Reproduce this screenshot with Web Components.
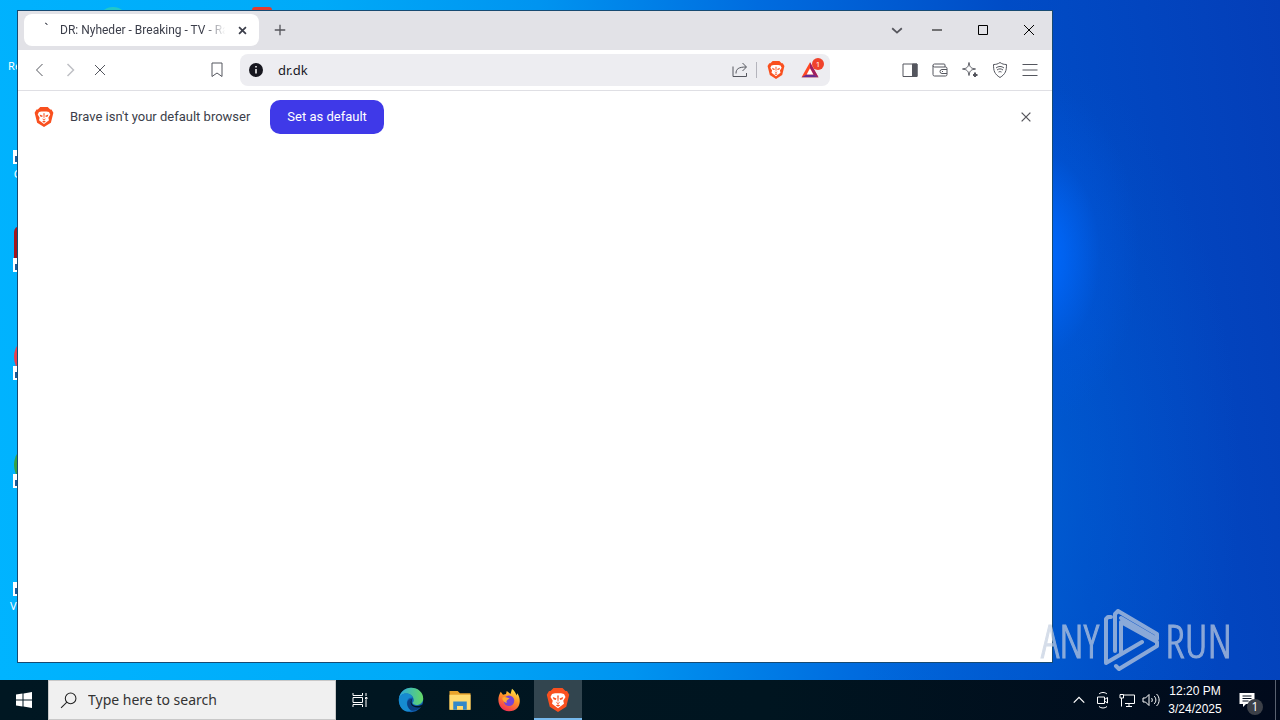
<!DOCTYPE html>
<html lang="en">
<head>
<meta charset="utf-8">
<title>Desktop</title>
<style>
    body {
        margin: 0;
        min-height: 100vh;
        display: flex;
        flex-direction: column;
        overflow: hidden;
        font-family: "Noto Sans", "Open Sans", sans-serif;
    }
    desk-top {
        flex: 1;
    }
</style>
</head>
<body>
<desk-top>
    <desk-icon slot="icons" label="Recycle Bin"></desk-icon>
    <desk-icon slot="icons" label="CCleaner" shortcut></desk-icon>
    <desk-icon slot="icons" label="Adobe Acrobat" color="#a3161c" shape="square" shortcut></desk-icon>
    <desk-icon slot="icons" label="Firefox" color="#e8404c" shape="circle" shortcut></desk-icon>
    <desk-icon slot="icons" label="Google Chrome" color="#35a244" shape="circle" shortcut></desk-icon>
    <desk-icon slot="icons" label="VLC media player" shortcut></desk-icon>
    <browser-window>
        <browser-tab slot="tabs">DR: Nyheder - Breaking - TV - Radio</browser-tab>
        <tool-bar slot="toolbar" url="dr.dk"></tool-bar>
        <info-bar slot="infobar" action="Set as default">Brave isn't your default browser</info-bar>
    </browser-window>
    <any-run-mark slot="mark"></any-run-mark>
</desk-top>
<task-bar time="12:20 PM" date="3/24/2025"></task-bar>

<script>
const icons = {
    back: `<path d="M21 4L9 16l12 12"/>`,
    forward: `<path d="M11 4l12 12-12 12"/>`,
    close: `<path d="M6 6l20 20M26 6L6 26"/>`,
    plus: `<path d="M16 4v24M4 16h24"/>`,
    down: `<path d="M5 12l11 10 11-10"/>`,
    minimize: `<path d="M6 16h20"/>`,
    maximize: `<path d="M7 7h18v18H7z"/>`,
    bookmark: `<path d="M6 2h20v27l-10-7-10 7z" stroke-linejoin="round"/>`,
    info: `<circle cx="16" cy="16" r="14" fill="#17171f" stroke="none"/><path d="M16 14v9M16 8v3" stroke="#fff" stroke-width="3"/>`,
    share: `<path d="M2 9v20h27v-7M8 23c0-9 5-13 20-13M21 2l8 8-8 8"/>`,
    lion: `<path d="M10 0h12l4 4h2l3 5-1 4-3 12-11 7-11-7-3-12-1-4 3-5h2z" fill="#f9501f"/>
        <path d="M12 7h8l4 1 2 4-3 5 1 4-8 6-8-6 1-4-3-5 2-4z" fill="#fff"/>
        <path d="M9 12l5 2-1 2-3-1zM23 12l-5 2 1 2 3-1zM15 10h2l-.5 8h-1zM13 18l3 2 3-2-2 3h-2zM13 23l3-1 3 1-3 2z" fill="#f9501f"/>`,
    bat: `<path d="M16 2L31 29H1z" fill="#ff4724"/><path d="M16 2l15 27-9-5-6-11z" fill="#9e1f63"/><path d="M1 29l9-5h12l9 5z" fill="#662d91"/><path d="M16 13l6 11H10z" fill="#fff"/>`,
    sidebar: `<path d="M2 4h28v25H2z"/><path d="M21 4h9v25h-9z" fill="currentColor"/>`,
    wallet: `<path d="M26 10V6a2 2 0 0 0-2-2H5a3 3 0 0 0 0 6h22a3 3 0 0 1 3 3v12a3 3 0 0 1-3 3H5a3 3 0 0 1-3-3V7M30 15H20a4 4 0 0 0 0 8h10M20 19h2"/>`,
    sparkle: `<path d="M14 1c1 9 4 12 13 13-9 1-12 4-13 13C13 18 10 15 1 14 10 13 13 10 14 1z" stroke-linejoin="round"/><path d="M26 21v9M22 26h9" stroke-width="4"/>`,
    shield: `<path d="M16 1c4 3 8 4 13 4 0 13-2 19-13 26C5 24 3 18 3 5c5 0 9-1 13-4z"/><path d="M8 12c5-4 11-4 16 0M10 16c4-3 8-3 12 0M13 20c2-1 4-1 6 0"/>`,
    menu: `<path d="M1 5h30M1 16h30M1 27h30"/>`,
    windows: `<path d="M0 5l13-2v12H0zM15 3l17-3v15H15zM0 17h13v12L0 27zM15 17h17v15l-17-3z" fill="#fff" stroke="none"/>`,
    search: `<circle cx="20" cy="12" r="10"/><path d="M13 19L2 30"/>`,
    taskview: `<path d="M2 2v5h19V2M2 30v-5h19v5M2 11h19v10H2zM28 2v6M28 16v14M27 11h3v3h-3z"/>`,
    edge: `<defs><linearGradient id="wave" x1="0" y1="0" x2="1" y2="0"><stop stop-color="#2aa7e0"/><stop offset="1" stop-color="#64d865"/></linearGradient></defs>
        <circle cx="16" cy="16" r="15" fill="#1263b5"/>
        <path d="M1 15C2 6 9 1 16 1c9 0 15 6 15 13 0 5-4 8-8 8-3 0-5-1-5-3 1-1 2-2 1-5-1-4-5-6-9-6-5 0-8 3-9 7z" fill="url(#wave)"/>
        <path d="M1 16c0-5 4-8 9-8 4 0 7 2 8 5-8-1-10 9-2 16-8 4-15-4-15-13z" fill="#168bd0"/>
        <path d="M16 29c-7-6-6-15 2-15-4 6 2 13 12 7-3 6-8 9-14 8z" fill="#0b3f82"/>
        <path d="M18 14c-4 5 0 11 9 9l5-2v3l-4 1c-6 1-11-1-12-4-1-3 0-5 2-7z" fill="#001722"/>`,
    folder: `<path d="M2 4h11l3 3h14v22H2z" fill="#e8a42c"/><path d="M2 9h28v20H2z" fill="#ffdb70"/><path d="M7 18h18v11h-5v-5h-8v5H7z" fill="#3289c8"/>`,
    firefox: `<defs><linearGradient id="fire" x1=".8" y1="0" x2=".3" y2="1"><stop stop-color="#fff04a"/><stop offset=".45" stop-color="#ff9427"/><stop offset="1" stop-color="#f22c55"/></linearGradient></defs>
        <path d="M5 5l3 4 4-1 1-4 5 4 2-7c4 3 5 6 6 9l1-3c7 10 3 24-11 24C3 31-2 16 5 5z" fill="url(#fire)"/>
        <circle cx="16" cy="17" r="7" fill="#7544d6"/><path d="M7 13c4-2 6 0 10 1-4 2-5 3-4 6-4-1-6-4-6-7z" fill="#ffab31"/>`,
    up: `<path d="M4 22l12-12 12 12"/>`,
    meet: `<path d="M5 10h14v13H5zM19 15l6-4v11l-6-4M8 4c4-4 12-4 16 0M8 29c4 4 12 4 16 0"/>`,
    network: `<path d="M9 6h22v17H12M20 23v6M14 29h12M2 5h7v7H2zM5 12v17"/>`,
    volume: `<path d="M0 12h5l7-7v22l-7-7H0zM17 12c2 2 2 6 0 8M22 8c5 4 5 12 0 16M27 4c7 6 7 18 0 24"/>`,
    notes: `<path d="M1 2h30v22H14l-6 6v-6H1z" fill="#fff" stroke="none"/><path d="M7 8h18M7 13h18M7 18h12" stroke="#020c1c"/>`
};

class SvgIcon extends HTMLElement {
    constructor() {
        super();
        this.attachShadow({ mode: "open" });
    }

    connectedCallback() {
        const name = this.getAttribute("name");
        const size = this.getAttribute("size") || "16";
        const line = this.getAttribute("line") || "2";
        const painted = ["lion", "bat", "edge", "folder", "firefox"].includes(name);
        this.shadowRoot.innerHTML = `
            <style>
                :host { display: inline-flex; flex: none; }
                svg { width: ${size}px; height: ${size}px; overflow: visible; }
            </style>
            <svg viewBox="0 0 32 32" fill="none" stroke="${painted ? "none" : "currentColor"}" stroke-width="${line}" aria-hidden="true">${icons[name]}</svg>
        `;
    }
}

class DeskTop extends HTMLElement {
    constructor() {
        super();
        this.attachShadow({ mode: "open" });
        this.shadowRoot.innerHTML = `
            <style>
                :host {
                    display: block;
                    position: relative;
                    overflow: hidden;
                    background:
                        radial-gradient(ellipse 100px 170px at 1040px 255px, #006aff, #0066f8cc 25%, #005ce844 60%, #005ce800),
                        radial-gradient(ellipse 200px 420px at 1040px 480px, #0064d888, #0060d444 50%, #0062dc00),
                        linear-gradient(82deg, #00b4ff 0%, #00aaf8 30%, #0094f0 46%, #006cdf 62%, #004cc6 80%, #043eb8 100%);
                }
                .icons {
                    display: flex;
                    flex-direction: column;
                    padding-top: 10px;
                }
                .peek {
                    position: absolute;
                    border-radius: 50%;
                }
                .teal { left: 98px; top: 7px; width: 30px; height: 30px; background: #22c7c9; }
                .red { left: 252px; top: 7px; width: 20px; height: 20px; border-radius: 3px; background: #e23a2e; }
                ::slotted(browser-window) {
                    position: absolute;
                    inset: 10px 227px 17px 17px;
                }
                ::slotted(any-run-mark) {
                    position: absolute;
                    right: 48px;
                    bottom: 8px;
                }
            </style>
            <div class="peek teal"></div>
            <div class="peek red"></div>
            <div class="icons"><slot name="icons"></slot></div>
            <slot></slot>
            <slot name="mark"></slot>
        `;
    }
}

class DeskIcon extends HTMLElement {
    constructor() {
        super();
        this.attachShadow({ mode: "open" });
    }

    connectedCallback() {
        const color = this.getAttribute("color") || "transparent";
        const round = this.getAttribute("shape") === "circle" ? "50%" : "6px";
        this.shadowRoot.innerHTML = `
            <style>
                :host {
                    display: block;
                    width: 74px;
                    height: 108px;
                    color: #fff;
                    font-size: 11px;
                    line-height: 16px;
                    text-align: center;
                }
                .art {
                    position: relative;
                    width: 46px;
                    height: 46px;
                    margin: 0 auto 2px;
                    border-radius: ${round};
                    background: ${color};
                }
                .arrow { position: absolute; left: -1px; bottom: 0; width: 14px; height: 14px; background: #fff; color: #1a5a9a; }
            </style>
            <div class="art">
                ${this.hasAttribute("shortcut") ? `<svg class="arrow" viewBox="0 0 14 14" fill="none" stroke="currentColor" stroke-width="2"><path d="M3 12V7h7M7 3l4 4-4 4"/></svg>` : ""}
            </div>
            <span>${this.getAttribute("label")}</span>
        `;
    }
}

class BrowserWindow extends HTMLElement {
    constructor() {
        super();
        this.attachShadow({ mode: "open" });
        this.shadowRoot.innerHTML = `
            <style>
                :host {
                    display: flex;
                    flex-direction: column;
                    border: 1px solid #174a72;
                    background: #fff;
                    color: #3b3e4a;
                }
                header {
                    display: flex;
                    align-items: center;
                    height: 38px;
                    padding: 0 0 1px 6px;
                    background: #e2e2e7;
                }
                button {
                    display: flex;
                    align-items: center;
                    justify-content: center;
                    height: 100%;
                    border: 0;
                    padding: 0;
                    background: none;
                    color: #000;
                    width: 46px;
                }
                .new, .list { width: 34px; color: #55555c; }
                .new { margin: 0 auto 0 4px; }
                main { flex: 1; }
            </style>
            <header>
                <slot name="tabs"></slot>
                <button class="new" aria-label="New tab"><svg-icon name="plus" size="14" line="3"></svg-icon></button>
                <button class="list" aria-label="Search tabs"><svg-icon name="down" size="14" line="4"></svg-icon></button>
                <button aria-label="Minimize"><svg-icon name="minimize"></svg-icon></button>
                <button aria-label="Maximize"><svg-icon name="maximize"></svg-icon></button>
                <button aria-label="Close"><svg-icon name="close"></svg-icon></button>
            </header>
            <slot name="toolbar"></slot>
            <slot name="infobar"></slot>
            <main></main>
        `;
    }
}

class BrowserTab extends HTMLElement {
    constructor() {
        super();
        this.attachShadow({ mode: "open" });
        this.shadowRoot.innerHTML = `
            <style>
                :host {
                    display: flex;
                    align-items: center;
                    box-sizing: border-box;
                    width: 235px;
                    height: 32px;
                    padding: 0 8px 0 16px;
                    border-radius: 8px;
                    background: #fff;
                    font: 12px/16px Roboto, "Open Sans", sans-serif;
                }
                .spinner { width: 20px; height: 16px; }
                .title {
                    flex: 1;
                    overflow: hidden;
                    white-space: nowrap;
                    mask-image: linear-gradient(to right, #000 86%, transparent 99%);
                }
                button { display: flex; border: 0; padding: 3px; margin-left: 7px; background: none; color: #3b3e4a; }
            </style>
            <svg class="spinner" viewBox="0 0 20 16" fill="none" stroke="#3b3e4a"><path d="M5 1l2 1v1"/></svg>
            <span class="title"><slot></slot></span>
            <button aria-label="Close tab"><svg-icon name="close" size="11" line="5"></svg-icon></button>
        `;
    }
}

class ToolBar extends HTMLElement {
    constructor() {
        super();
        this.attachShadow({ mode: "open" });
    }

    connectedCallback() {
        this.shadowRoot.innerHTML = `
            <style>
                :host {
                    display: flex;
                    align-items: center;
                    height: 40px;
                    padding: 0 7px;
                    border-bottom: 1px solid #dfdfe4;
                    color: #54565e;
                }
                button {
                    display: flex;
                    align-items: center;
                    justify-content: center;
                    position: relative;
                    flex: none;
                    width: 30px;
                    height: 30px;
                    padding: 0;
                    border: 0;
                    background: none;
                    color: inherit;
                }
                button:disabled { color: #bfc0c5; }
                .bookmark { margin-left: 87px; }
                form {
                    display: flex;
                    align-items: center;
                    box-sizing: border-box;
                    flex: 1;
                    height: 32px;
                    margin: 0 65px 0 8px;
                    padding: 0 5px 0 1px;
                    border-radius: 8px;
                    background: #ededf1;
                }
                input {
                    flex: 1;
                    min-width: 0;
                    padding: 0 7px;
                    border: 0;
                    background: none;
                    color: #17171f;
                    font: 13px/20px "Noto Sans", "Open Sans", sans-serif;
                    outline: 0;
                }
                .split { width: 1px; height: 16px; margin: 0 4px 0 1px; background: #b4b4bc; }
                .rewards { margin-left: 4px; }
                .badge {
                    position: absolute;
                    top: 3px;
                    right: 1px;
                    width: 12px;
                    border-radius: 6px;
                    background: #f0432c;
                    color: #fff;
                    font: 8px/12px "Open Sans", sans-serif;
                }
            </style>
            <button aria-label="Back"><svg-icon name="back"></svg-icon></button>
            <button aria-label="Forward" disabled><svg-icon name="forward" line="3"></svg-icon></button>
            <button aria-label="Stop"><svg-icon name="close"></svg-icon></button>
            <button class="bookmark" aria-label="Bookmark"><svg-icon name="bookmark"></svg-icon></button>
            <form>
                <button type="button" aria-label="Site information"><svg-icon name="info"></svg-icon></button>
                <input aria-label="Address" value="${this.getAttribute("url")}">
                <button type="button" aria-label="Share"><svg-icon name="share"></svg-icon></button>
                <span class="split"></span>
                <button type="button" aria-label="Brave Shields"><svg-icon name="lion" size="18"></svg-icon></button>
                <button type="button" class="rewards" aria-label="Brave Rewards"><svg-icon name="bat" size="18"></svg-icon><span class="badge">1</span></button>
            </form>
            <button aria-label="Sidebar"><svg-icon name="sidebar"></svg-icon></button>
            <button aria-label="Wallet"><svg-icon name="wallet"></svg-icon></button>
            <button aria-label="Leo AI"><svg-icon name="sparkle"></svg-icon></button>
            <button aria-label="VPN"><svg-icon name="shield"></svg-icon></button>
            <button aria-label="Menu"><svg-icon name="menu"></svg-icon></button>
        `;
    }
}

class InfoBar extends HTMLElement {
    constructor() {
        super();
        this.attachShadow({ mode: "open" });
    }

    connectedCallback() {
        this.shadowRoot.innerHTML = `
            <style>
                :host {
                    display: flex;
                    align-items: center;
                    gap: 16px;
                    padding: 9px 16px;
                    font: 13px/18px Roboto, "Open Sans", sans-serif;
                }
                .action {
                    margin-left: 4px;
                    padding: 8px 17px;
                    border: 0;
                    border-radius: 10px;
                    background: #3f39e8;
                    color: #fff;
                    font: inherit;
                }
                .close { display: flex; margin-left: auto; padding: 3px; border: 0; background: none; color: #55555c; }
            </style>
            <svg-icon name="lion" size="20"></svg-icon>
            <span><slot></slot></span>
            <button class="action">${this.getAttribute("action")}</button>
            <button class="close" aria-label="Dismiss"><svg-icon name="close" size="14" line="3"></svg-icon></button>
        `;
    }
}

class AnyRunMark extends HTMLElement {
    constructor() {
        super();
        this.attachShadow({ mode: "open" });
        this.shadowRoot.innerHTML = `
            <style>
                :host {
                    display: flex;
                    align-items: center;
                    gap: 5px;
                    color: #c4cfe0;
                    opacity: .7;
                    font: 300 46px/64px "Open Sans Condensed Light", "Open Sans Condensed", "Roboto Condensed", sans-serif;
                    -webkit-text-stroke: 1px currentColor;
                }
                svg { width: 56px; height: 62px; }
            </style>
            <span>ANY</span>
            <svg viewBox="0 0 56 62" fill="none" stroke="currentColor" stroke-width="4" stroke-linejoin="round" stroke-linecap="round" aria-hidden="true">
                <path d="M7 8H4L2 10v44l36-21M11 42V5l3-3 39 23v5L17 9M12 57l3 3 38-23v-4L17 13v31"/>
            </svg>
            <span>RUN</span>
        `;
    }
}

class TaskBar extends HTMLElement {
    constructor() {
        super();
        this.attachShadow({ mode: "open" });
    }

    connectedCallback() {
        this.shadowRoot.innerHTML = `
            <style>
                :host {
                    display: flex;
                    height: 40px;
                    background: linear-gradient(90deg, #001722, #001520 60%, #010a1c);
                    color: #fff;
                }
                button {
                    display: flex;
                    align-items: center;
                    justify-content: center;
                    position: relative;
                    width: 48px;
                    padding: 0;
                    border: 0;
                    background: none;
                    color: inherit;
                }
                label {
                    display: flex;
                    align-items: center;
                    box-sizing: border-box;
                    width: 288px;
                    padding-left: 11px;
                    gap: 11px;
                    border: 1px solid #c8c8c8;
                    background: #f0f0f0;
                    color: #222;
                }
                input {
                    flex: 1;
                    min-width: 0;
                    padding: 0;
                    border: 0;
                    background: none;
                    font: 14px/20px "Noto Sans", "Open Sans", sans-serif;
                    outline: 0;
                }
                input::placeholder { color: #333; opacity: 1; }
                nav { display: flex; flex: 1; gap: 1px; }
                .view { margin-right: 2px; }
                .active { background: #32454f; box-shadow: inset 0 -2px #76b9ed; }
                .tray { width: 24px; }
                .clock {
                    width: 64px;
                    display: flex;
                    flex-direction: column;
                    font: 12px/18px "Liberation Sans", sans-serif;
                }
                .bell { padding-right: 8px; }
                .count {
                    position: absolute;
                    right: 12px;
                    bottom: 5px;
                    width: 16px;
                    border-radius: 8px;
                    background: #3c4048;
                    font: 12px/16px "Open Sans", sans-serif;
                }
                .peek { width: 5px; border-left: 1px solid #5a6270; }
            </style>
            <button aria-label="Start"><svg-icon name="windows"></svg-icon></button>
            <label><svg-icon name="search" size="17"></svg-icon><input placeholder="Type here to search" aria-label="Search"></label>
            <nav>
                <button class="view" aria-label="Task View"><svg-icon name="taskview"></svg-icon></button>
                <button aria-label="Microsoft Edge"><svg-icon name="edge" size="26"></svg-icon></button>
                <button aria-label="File Explorer"><svg-icon name="folder" size="24"></svg-icon></button>
                <button aria-label="Firefox"><svg-icon name="firefox" size="24"></svg-icon></button>
                <button class="active" aria-label="Brave"><svg-icon name="lion" size="24"></svg-icon></button>
            </nav>
            <button class="tray" aria-label="Show hidden icons"><svg-icon name="up" size="14" line="3"></svg-icon></button>
            <button class="tray" aria-label="Meet Now"><svg-icon name="meet"></svg-icon></button>
            <button class="tray" aria-label="Network"><svg-icon name="network"></svg-icon></button>
            <button class="tray" aria-label="Volume"><svg-icon name="volume"></svg-icon></button>
            <button class="clock"><span>${this.getAttribute("time")}</span><span>${this.getAttribute("date")}</span></button>
            <button class="bell" aria-label="Notifications"><svg-icon name="notes"></svg-icon><span class="count">1</span></button>
            <button class="peek" aria-label="Show desktop"></button>
        `;
    }
}

customElements.define("svg-icon", SvgIcon);
customElements.define("desk-top", DeskTop);
customElements.define("desk-icon", DeskIcon);
customElements.define("browser-window", BrowserWindow);
customElements.define("browser-tab", BrowserTab);
customElements.define("tool-bar", ToolBar);
customElements.define("info-bar", InfoBar);
customElements.define("any-run-mark", AnyRunMark);
customElements.define("task-bar", TaskBar);
</script>
</body>
</html>
